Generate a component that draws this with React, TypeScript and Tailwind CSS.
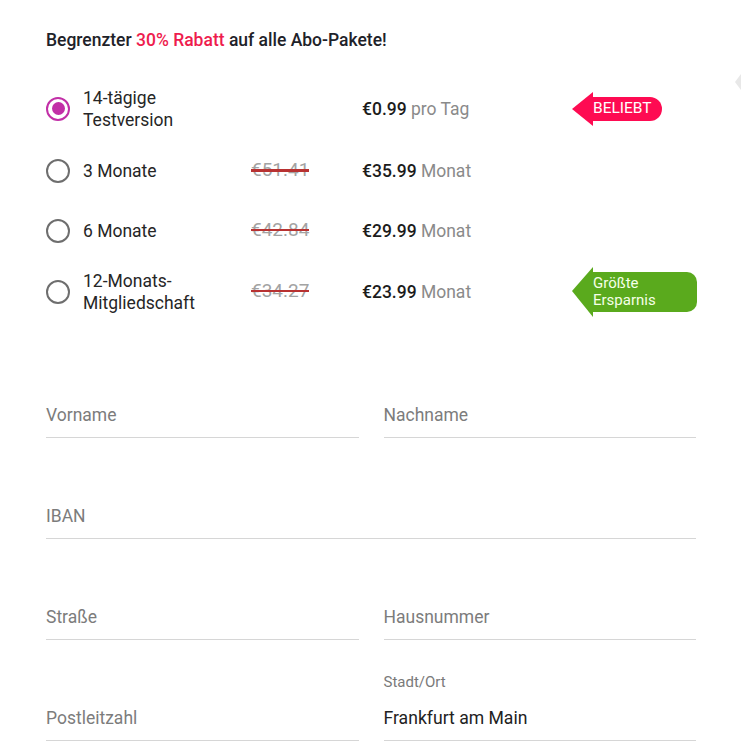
import React from "react";

type Plan = { label: React.ReactNode; old?: string; price: string; unit: string; h: number; badge?: "pink" | "green"; checked?: boolean };

const plans: Plan[] = [
  { label: <>14-tägige<br />Testversion</>, price: "€0.99", unit: "pro Tag", h: 63, badge: "pink", checked: true },
  { label: "3 Monate", old: "€51.41", price: "€35.99", unit: "Monat", h: 62 },
  { label: "6 Monate", old: "€42.84", price: "€29.99", unit: "Monat", h: 58 },
  { label: <>12-Monats-<br />Mitgliedschaft</>, old: "€34.27", price: "€23.99", unit: "Monat", h: 64, badge: "green" },
];

function Radio({ checked }: { checked?: boolean }) {
  if (checked)
    return (
      <span className="w-[24px] h-[24px] rounded-full border-[2.5px] border-[#c22fa7] flex items-center justify-center shrink-0">
        <span className="w-[13px] h-[13px] rounded-full bg-[#c22fa7]" />
      </span>
    );
  return <span className="w-[24px] h-[24px] rounded-full border-2 border-[#6e6e6e] shrink-0" />;
}

function PinkBadge() {
  return (
    <div className="flex items-center">
      <svg width="21" height="34" viewBox="0 0 21 34" className="block">
        <polygon points="0,17 21,0 21,34" fill="#fe0b52" />
      </svg>
      <div className="h-[24px] w-[69px] bg-[#fe0b52] rounded-r-full pl-[0px] flex items-center text-white text-[15.5px] leading-none">
        BELIEBT
      </div>
    </div>
  );
}

function GreenBadge() {
  return (
    <div className="flex items-center">
      <svg width="21" height="50" viewBox="0 0 21 50" className="block">
        <polygon points="0,24 21,0 21,50" fill="#5aaa1d" />
      </svg>
      <div className="h-[40px] w-[104px] bg-[#5aaa1d] rounded-r-[10px] pl-[0px] flex items-center text-[#f5ffe8] text-[15px] leading-[17px]">
        <span>Größte<br />Ersparnis</span>
      </div>
    </div>
  );
}

function Field({ label, value, top }: { label: string; value?: string; top?: string }) {
  return (
    <div className="h-[101px] flex flex-col justify-end border-b border-[#d6d6d6] pb-[10px]">
      {top && <div className="text-[15px] text-[#7a7a7a] leading-[20px] mb-[14px]">{top}</div>}
      {value ? (
        <div className="text-[17.6px] text-[#222] leading-[24px]">{value}</div>
      ) : (
        <div className="text-[17.5px] text-[#7c7c7c] leading-[24px]">{label}</div>
      )}
    </div>
  );
}

export default function App() {
  return (
    <div className="relative w-[741px] h-[747px] overflow-hidden bg-white font-['Roboto',sans-serif]">
      <div className="absolute right-0 top-[74px] w-0 h-0 border-t-[8px] border-b-[8px] border-r-[6px] border-t-transparent border-b-transparent border-r-[#e8e8e8]" />
      <div className="pl-[46px] pr-[45px] pt-[29px]">
        <h1 className="text-[17.5px] font-medium text-[#1e2229] leading-[22px]">
          Begrenzter <span className="text-[#ee1c4e]">30% Rabatt</span> auf alle Abo-Pakete!
        </h1>
        <div className="mt-[26px]">
          {plans.map((p, i) => (
            <div key={i} className="grid grid-cols-[205px_111px_210px_1fr] items-center" style={{ height: p.h }}>
              <div className="flex items-center gap-[13px]">
                <Radio checked={p.checked} />
                <span className="text-[17.5px] leading-[22px] text-[#262626]">{p.label}</span>
              </div>
              <div>
                {p.old && (
                  <span className="relative text-[19px] text-[#a3a3a3] leading-[22px]">
                    {p.old}
                    <span className={`absolute left-0 right-0 top-[11px] ${i === 1 ? "h-[2.5px]" : "h-[1.5px]"} bg-[#b83232]`} />
                  </span>
                )}
              </div>
              <div className="text-[17.5px] leading-[22px]">
                <span className="text-[#1c1c1c] font-medium">{p.price}</span>{" "}
                <span className="text-[#8a8a8a]">{p.unit}</span>
              </div>
              <div>
                {p.badge === "pink" && <PinkBadge />}
                {p.badge === "green" && <GreenBadge />}
              </div>
            </div>
          ))}
        </div>
        <div className="mt-[13px] grid grid-cols-2 gap-x-[25px] gap-y-0">
          <Field label="Vorname" />
          <Field label="Nachname" />
          <div className="col-span-2">
            <Field label="IBAN" />
          </div>
          <Field label="Straße" />
          <Field label="Hausnummer" />
          <Field label="Postleitzahl" />
          <Field label="Stadt/Ort" top="Stadt/Ort" value="Frankfurt am Main" />
        </div>
      </div>
    </div>
  );
}
